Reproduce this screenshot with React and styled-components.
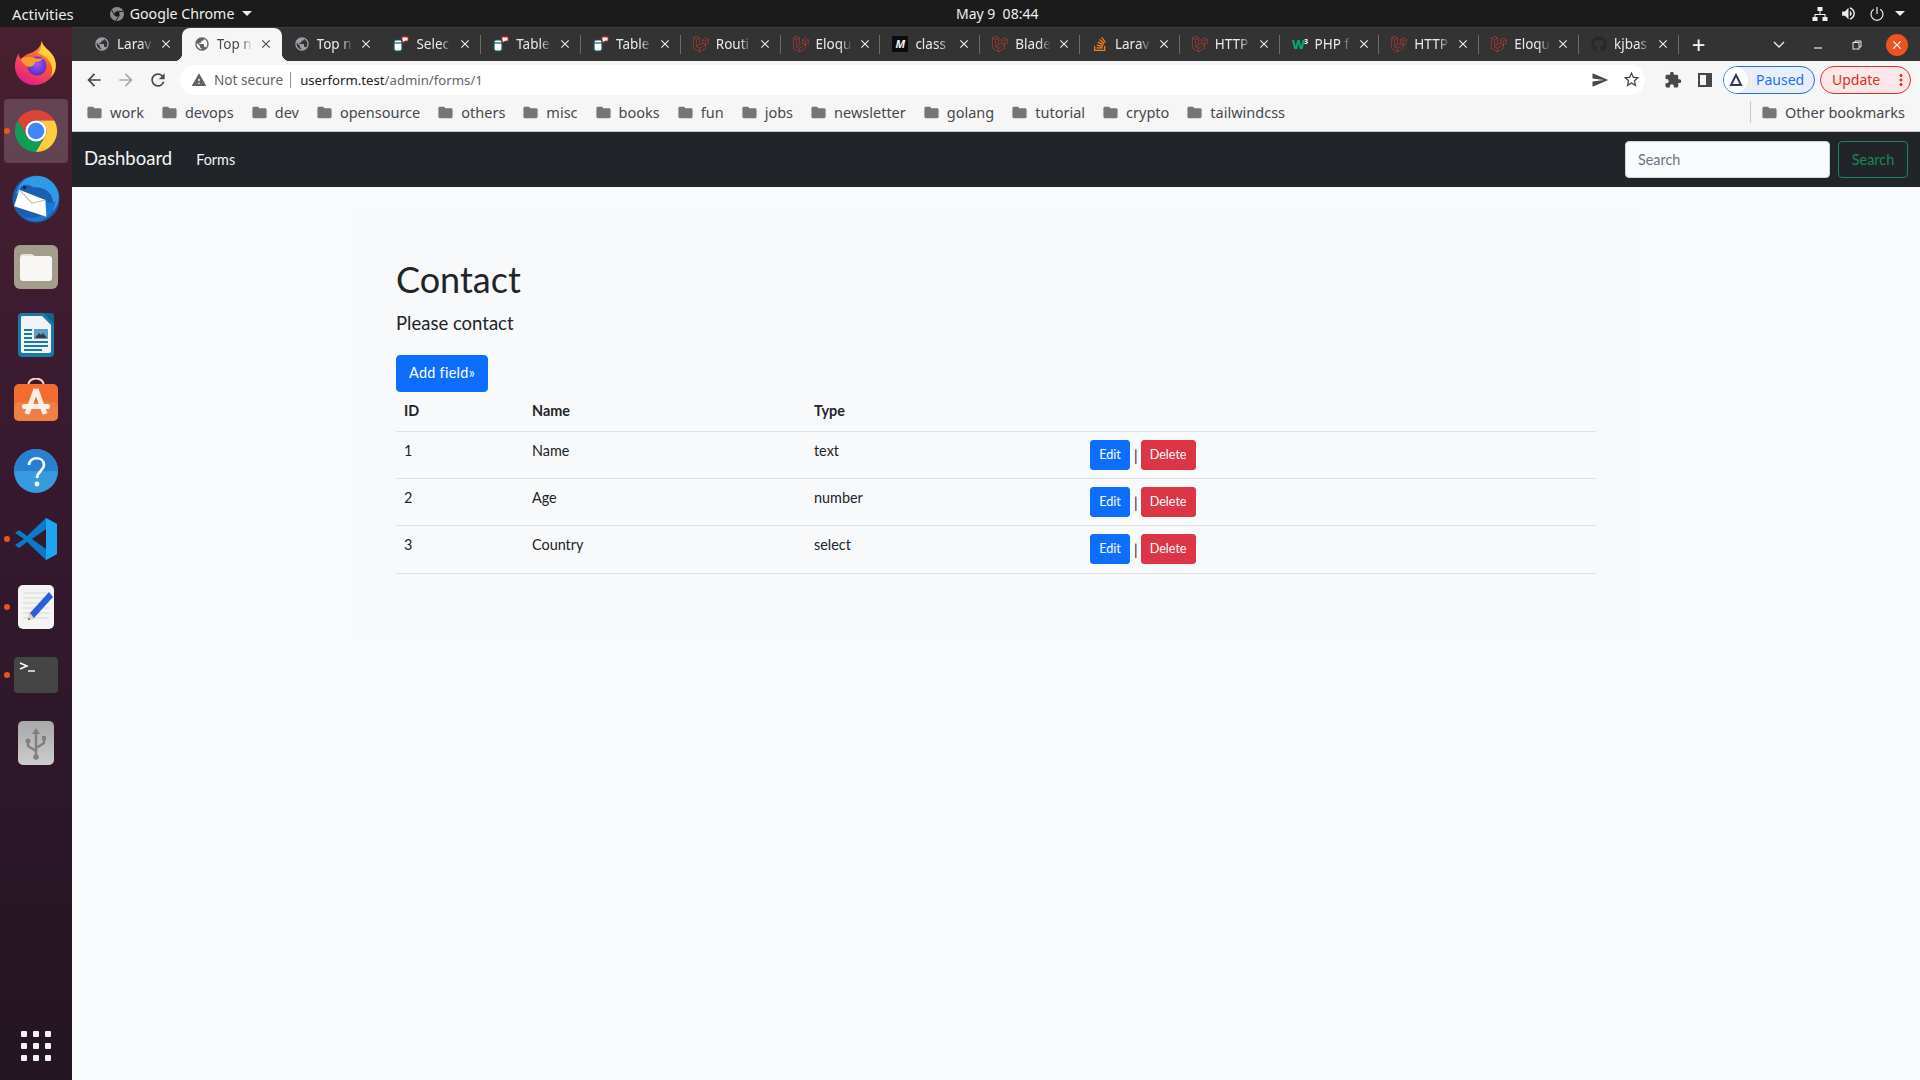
import React from 'react';
import styled, { createGlobalStyle } from 'styled-components';
import { FaGithub, FaStackOverflow } from 'react-icons/fa';
import { SiLaravel } from 'react-icons/si';
import {
  MdArrowBack,
  MdArrowForward,
  MdClose,
  MdExtension,
  MdFolder,
  MdMoreVert,
  MdPublic,
  MdRefresh,
  MdSend,
  MdStarBorder,
  MdVolumeUp,
  MdWarning
} from 'react-icons/md';

const UI_FONT = '"Noto Sans", "Open Sans", sans-serif';
const PAGE_FONT = 'Lato, "Noto Sans", sans-serif';

const GlobalStyle = createGlobalStyle`
  html, body {
    margin: 0;
    padding: 0;
    height: 100%;
    overflow: hidden;
    background: #f8fafc;
  }
  * {
    box-sizing: border-box;
  }
`;

const Desktop = styled.div`
  width: 1920px;
  height: 1080px;
  display: grid;
  grid-template-rows: 27px 1fr;
  grid-template-columns: 72px 1fr;
  overflow: hidden;
  font-family: ${UI_FONT};
`;

/* gnome top bar */
const TopBar = styled.header`
  grid-column: 1 / 3;
  display: grid;
  grid-template-columns: 956px auto 1fr;
  align-items: center;
  background: #1b1b1b;
  color: #eeeeee;
  font-size: 14px;
`;

const TopLeft = styled.div`
  display: flex;
  align-items: center;
  padding-left: 12px;
`;

const Activities = styled.span`
  font-size: 14.8px;
`;

const AppMenu = styled.div`
  display: flex;
  align-items: center;
  gap: 6px;
  margin-left: 36px;
  font-size: 14.2px;
`;

const Caret = styled.span`
  width: 0;
  height: 0;
  margin-left: ${({ offset }) => offset};
  border-left: 5px solid transparent;
  border-right: 5px solid transparent;
  border-top: 5px solid #eeeeee;
`;

const TopRight = styled.div`
  display: flex;
  align-items: center;
  justify-content: flex-end;
  gap: 12px;
  padding-right: 15px;
`;

/* dock */
const Dock = styled.nav`
  display: flex;
  flex-direction: column;
  align-items: center;
  padding-top: 2px;
  background: linear-gradient(180deg, #48202f 0%, #36192f 45%, #231521 100%);
`;

const DockSlot = styled.div`
  position: relative;
  flex: 0 0 ${({ active }) => (active ? '64px' : '68px')};
  width: 64px;
  display: flex;
  align-items: center;
  justify-content: center;
  border-radius: 4px;
  background: ${({ active }) => (active ? 'rgba(255,255,255,0.17)' : 'transparent')};
  margin: ${({ active }) => (active ? '2px 0' : '0')};
`;

const RunDot = styled.span`
  position: absolute;
  left: 0;
  top: 50%;
  width: 6px;
  height: 6px;
  margin-top: -3px;
  border-radius: 50%;
  background: #e95420;
`;

const AppGrid = styled.div`
  margin-top: auto;
  margin-bottom: 19px;
  display: grid;
  grid-template-columns: repeat(3, 6px);
  gap: 6px;
`;

const AppGridDot = styled.span`
  width: 6px;
  height: 6px;
  border-radius: 1px;
  background: #f2f2f2;
`;

const Firefox = () => (
  <svg width="46" height="48" viewBox="0 0 48 48">
    <defs>
      <linearGradient id="ffBody" x1="0.8" y1="0" x2="0.3" y2="1">
        <stop offset="0" stopColor="#ffb02e" />
        <stop offset="0.45" stopColor="#ff5a36" />
        <stop offset="1" stopColor="#e31b8d" />
      </linearGradient>
      <radialGradient id="ffCore" cx="0.5" cy="0.4" r="0.6">
        <stop offset="0" stopColor="#9a5cf5" />
        <stop offset="1" stopColor="#5b2bc0" />
      </radialGradient>
    </defs>
    <path d="M30 1c1 6 6 8 10 13 5 6 6 14 3 20-4 8-11 13-20 13C11 47 2 38 2 27c0-5 2-10 4-13 0 3 1 5 3 6 2-4 7-6 11-7 4-2 9-5 10-12z" fill="url(#ffBody)" />
    <path d="M30 1c1 6 6 8 10 13 5 6 6 14 3 20-1 2-2 3-3 5 2-8 1-16-6-21-3-3-6-3-8-5 3-2 4-7 4-12z" fill="#ffcf3f" />
    <circle cx="25" cy="27" r="10" fill="url(#ffCore)" />
    <path d="M8 20c4-3 10-3 15-1 3 1 7 1 9-1-2 4-6 5-9 5 0 3-3 5-6 5-3 0-6-2-9-8z" fill="#ff9a2e" />
  </svg>
);

const Chrome = () => (
  <svg width="46" height="46" viewBox="0 0 48 48">
    <path d="M4.95 13A22 22 0 0 1 43.05 13H24A11 11 0 0 0 14.47 29.5z" fill="#db4437" />
    <path d="M4.95 13A22 22 0 0 0 24 46L33.53 29.5A11 11 0 0 1 14.47 29.5z" fill="#0f9d58" />
    <path d="M24 46A22 22 0 0 0 43.05 13H24A11 11 0 0 1 33.53 29.5z" fill="#ffcd40" />
    <circle cx="24" cy="24" r="11" fill="#ffffff" />
    <circle cx="24" cy="24" r="8.6" fill="#4285f4" />
  </svg>
);

const Thunderbird = () => (
  <svg width="50" height="50" viewBox="0 0 48 48">
    <circle cx="24" cy="24" r="22.5" fill="#1a5fb0" />
    <path d="M5 20C6 9 15 1 27 2c10 1 18 9 19 19 0 6-2 11-6 15 2-9 0-17-7-21-5-3-11-3-17-1-4 1-8 3-11 6z" fill="#2f9be6" />
    <path d="M33 26c4 2 7 2 10 0-1 9-7 17-15 19-6 1-12 0-17-4 8 2 16 1 22-3z" fill="#1c78d0" />
    <path d="M8 15L33 25 34 41 3 31z" fill="#ffffff" />
    <path d="M8 15l12 13 13-3" fill="none" stroke="#b8bcc4" strokeWidth="1" />
    <path d="M8 15c1-4 6-6 10-4 4 1 8 4 9 8z" fill="#1a5fb0" />
    <circle cx="13" cy="13" r="1.6" fill="#0c2444" />
  </svg>
);

const Files = () => (
  <svg width="44" height="44" viewBox="0 0 44 44">
    <rect width="44" height="44" rx="6" fill="#a49d8b" />
    <path d="M6 12a3 3 0 0 1 3-3h9l4 3h-16z" fill="#e6e3dc" />
    <rect x="6" y="11" width="32" height="25" rx="3" fill="#f8f7f5" />
  </svg>
);

const Writer = () => (
  <svg width="36" height="44" viewBox="0 0 36 44">
    <path d="M4 0h22l10 10v30a4 4 0 0 1-4 4H4a4 4 0 0 1-4-4V4a4 4 0 0 1 4-4z" fill="#1c78ab" />
    <path d="M4 3h20l9 9v26a2 2 0 0 1-2 2H5a2 2 0 0 1-2-2V4z" fill="#f1f3f4" />
    <path d="M26 0h7a3 3 0 0 1 3 3v7z" fill="#14618c" />
    <rect x="6" y="16" width="8" height="2" fill="#1c78ab" />
    <rect x="6" y="20" width="8" height="2" fill="#1c78ab" />
    <rect x="6" y="24" width="8" height="2" fill="#1c78ab" />
    <rect x="16" y="16" width="14" height="10" fill="#5b9fd0" />
    <path d="M17 25l4-5 2 2 2-2 4 5z" fill="#3b3b3b" />
    <rect x="6" y="28" width="24" height="2" fill="#1c78ab" />
    <rect x="6" y="32" width="24" height="2" fill="#1c78ab" />
    <rect x="6" y="36" width="18" height="2" fill="#1c78ab" />
  </svg>
);

const Store = () => (
  <svg width="44" height="50" viewBox="0 0 44 50">
    <path d="M14 8c0-10 16-10 16 0" fill="none" stroke="#f4d7b5" strokeWidth="2" />
    <rect y="6" width="44" height="37" rx="5" fill="#f26d2e" />
    <rect y="24" width="44" height="19" rx="5" fill="#ee7f47" />
    <path d="M22 11L13 36M22 11l9 25" fill="none" stroke="#fff0e6" strokeWidth="5" />
    <rect x="8" y="26" width="28" height="5" rx="2" fill="#fff0e6" />
  </svg>
);

const Help = () => (
  <svg width="46" height="46" viewBox="0 0 46 46">
    <circle cx="23" cy="23" r="22" fill="#3a9ae0" />
    <path d="M1 23a22 22 0 0 1 44 0z" fill="#2a80d0" />
    <path d="M16 17c0-9 15-9 15 0 0 6-7 6-7 13" fill="none" stroke="#ffffff" strokeWidth="2.6" />
    <circle cx="24" cy="36" r="2.4" fill="#ffffff" />
  </svg>
);

const VsCode = () => (
  <svg width="44" height="44" viewBox="0 0 44 44">
    <path d="M32 1l11 6v30l-11 6-19-18-8 6-4-3 9-6-9-6 4-3 8 6z" fill="#0a7bc4" />
    <path d="M32 1l11 6v30l-11 6z" fill="#20a4f0" />
    <path d="M32 12L18 22l14 10z" fill="#36192f" />
  </svg>
);

const Gedit = () => (
  <svg width="36" height="44" viewBox="0 0 36 44">
    <rect width="36" height="44" rx="5" fill="#f4f4f4" />
    <path d="M5 8h26M5 13h26M5 18h26M5 23h26M5 28h26M5 33h26" stroke="#d6d6d6" strokeWidth="1" />
    <path d="M31 7l4 5-19 21-6 2 2-7z" fill="#2b5fd9" />
    <path d="M12 28l4 5-6 2z" fill="#f5d2a8" />
    <path d="M11 33l-1 2 2-.6z" fill="#333333" />
  </svg>
);

const Terminal = () => (
  <svg width="44" height="36" viewBox="0 0 44 36">
    <rect width="44" height="36" rx="4" fill="#454545" />
    <path d="M6 6l7 3-7 3" fill="none" stroke="#ffffff" strokeWidth="1.4" />
    <path d="M14 14h7" stroke="#ffffff" strokeWidth="1.4" />
  </svg>
);

const UsbDrive = () => (
  <svg width="36" height="44" viewBox="0 0 36 44">
    <defs>
      <linearGradient id="usbBody" x1="0" y1="0" x2="0" y2="1">
        <stop offset="0" stopColor="#a8a8a8" />
        <stop offset="1" stopColor="#cdcdcd" />
      </linearGradient>
    </defs>
    <rect width="36" height="44" rx="5" fill="url(#usbBody)" />
    <path d="M18 8v28M18 30l-8-5v-5M18 27l8-5v-4" fill="none" stroke="#808080" strokeWidth="2.4" />
    <path d="M14 13l4-6 4 6z" fill="#808080" />
    <circle cx="18" cy="36" r="2.8" fill="#808080" />
    <circle cx="10" cy="20" r="2.5" fill="#808080" />
    <rect x="24" y="15" width="4" height="4" fill="#808080" />
  </svg>
);

const dockItems = [
  { key: 'firefox', Icon: Firefox },
  { key: 'chrome', Icon: Chrome, active: true, running: true },
  { key: 'thunderbird', Icon: Thunderbird },
  { key: 'files', Icon: Files },
  { key: 'writer', Icon: Writer },
  { key: 'store', Icon: Store },
  { key: 'help', Icon: Help },
  { key: 'vscode', Icon: VsCode, running: true },
  { key: 'gedit', Icon: Gedit, running: true },
  { key: 'terminal', Icon: Terminal, running: true },
  { key: 'usb', Icon: UsbDrive }
];

/* browser window */
const Browser = styled.div`
  display: flex;
  flex-direction: column;
  min-width: 0;
`;

const TabStrip = styled.div`
  flex: 0 0 34px;
  display: flex;
  align-items: stretch;
  padding-left: 10px;
  background: #333333;
  border-top: 1px solid #3d3d3d;
`;

const Tab = styled.div`
  position: relative;
  flex: 0 0 99.8px;
  display: flex;
  align-items: center;
  gap: 7px;
  padding: 0 0 2px 12px;
  color: ${({ active }) => (active ? '#45494d' : '#e8eaed')};
  font-size: 13.5px;
  background: ${({ active }) => (active ? '#f6f6f6' : 'transparent')};
  border-radius: ${({ active }) => (active ? '8px 8px 0 0' : '0')};

  &::after {
    content: '';
    position: absolute;
    right: 0;
    top: 7px;
    bottom: 7px;
    width: 1px;
    background: ${({ sep }) => (sep ? '#6c6c6c' : 'transparent')};
  }
`;

const TabFlare = styled.span`
  position: absolute;
  bottom: 0;
  ${({ side }) => side}: -8px;
  width: 8px;
  height: 8px;
  background: radial-gradient(
    circle at ${({ side }) => (side === 'left' ? '0 0' : '100% 0')},
    transparent 8px,
    #f6f6f6 8.5px
  );
`;

const TabIcon = styled.span`
  flex: 0 0 16px;
  height: 16px;
  display: flex;
  align-items: center;
  justify-content: center;
  color: ${({ color }) => color};
`;

const TabLabel = styled.span`
  flex: 0 0 36px;
  overflow: hidden;
  white-space: nowrap;
  -webkit-mask-image: linear-gradient(90deg, #000 68%, transparent 100%);
  mask-image: linear-gradient(90deg, #000 68%, transparent 100%);
`;

const TabClose = styled.span`
  display: flex;
  margin-left: -1px;
  color: ${({ active }) => (active ? '#45494d' : '#e8eaed')};
`;

const NewTab = styled.span`
  margin-left: 13px;
  align-self: center;
  display: flex;
  color: #f1f3f4;
  font-size: 24px;
  line-height: 24px;
  font-weight: 400;
`;

const WindowControls = styled.div`
  margin-left: auto;
  display: flex;
  align-items: center;
  color: #e8eaed;
`;

const WindowButton = styled.span`
  flex: 0 0 39px;
  display: flex;
  justify-content: center;
  align-items: center;
`;

const CloseCircle = styled.span`
  width: 22px;
  height: 22px;
  margin: 0 12px 0 10px;
  border-radius: 50%;
  background: #e95420;
  color: #ffffff;
  display: flex;
  align-items: center;
  justify-content: center;
`;

const Toolbar = styled.div`
  flex: 0 0 34px;
  display: flex;
  align-items: flex-end;
  padding-left: 6px;
  background: #f6f6f6;
`;

const NavGroup = styled.div`
  display: flex;
  margin-right: 6px;
  align-self: stretch;
  padding-top: 4px;
`;

const NavButton = styled.span`
  flex: 0 0 32px;
  display: flex;
  align-items: center;
  justify-content: center;
  color: ${({ disabled }) => (disabled ? '#aaaaaa' : '#45494d')};
`;

const Omnibox = styled.div`
  flex: 1;
  height: 30px;
  display: flex;
  align-items: center;
  padding: 0 4px 1px 11px;
  background: #ffffff;
  border-radius: 15px;
  font-size: 13.2px;
`;

const SecurityText = styled.span`
  margin-left: 7px;
  padding-right: 7px;
  border-right: 1px solid #8a8d91;
  font-size: 13.6px;
  line-height: 16px;
  color: #5f6368;
`;

const UrlHost = styled.span`
  margin-left: 9px;
  color: #202124;
`;

const UrlPath = styled.span`
  color: #5f6368;
`;

const OmniActions = styled.div`
  margin-left: auto;
  display: flex;
  align-items: center;
  gap: 13px;
  color: #45494d;
`;

const ToolActions = styled.div`
  display: flex;
  align-items: center;
  align-self: stretch;
  gap: 5px;
  padding: 4px 9px 0 14px;
`;

const ToolIcon = styled.span`
  flex: 0 0 27px;
  display: flex;
  justify-content: center;
  color: #45494d;
`;

const Chip = styled.div`
  height: 28px;
  width: ${({ width }) => width};
  display: flex;
  align-items: center;
  padding-bottom: 1px;
  font-size: 14px;
  border-radius: 14px;
  overflow: hidden;
  border: 1px solid ${({ color }) => color};
  color: ${({ color }) => color};
  background: ${({ tint }) => tint};
`;

const ChipAvatar = styled.span`
  width: 24px;
  height: 26px;
  flex: 0 0 24px;
  display: flex;
  justify-content: center;
  align-items: center;
  background: #ffffff;
  border-radius: 0 13px 13px 0;
`;

const ChipText = styled.span`
  margin-left: ${({ indent }) => indent};
`;

const ChipMenu = styled.span`
  margin-left: auto;
  display: flex;
`;

const BookmarksBar = styled.div`
  flex: 0 0 37px;
  display: flex;
  align-items: center;
  gap: 17px;
  padding: 0 15px 2px 14px;
  background: #f6f6f6;
  border-bottom: 1px solid #c9cacb;
  color: #45494d;
  font-size: 14.5px;
`;

const Bookmark = styled.div`
  display: flex;
  align-items: center;
  gap: 7px;
  white-space: nowrap;
`;

const OtherBookmarks = styled(Bookmark)`
  margin-left: auto;
  padding-left: 10px;
  border-left: 1px solid #c9cacb;
  line-height: 22px;
`;

const FolderIcon = styled(MdFolder)`
  color: #757575;
  font-size: 17px;
`;

/* the page inside the browser */
const Page = styled.main`
  flex: 1;
  background: #f8fafc;
  font-family: ${PAGE_FONT};
  color: #212529;
`;

const Navbar = styled.div`
  height: 55px;
  display: flex;
  align-items: center;
  padding: 0 12px;
  background: #212529;
`;

const Brand = styled.a`
  color: #f4f4f4;
  font-size: 18.5px;
  margin: 0 24px 3px 0;
`;

const NavLink = styled.a`
  color: #f4f4f4;
  font-size: 14.4px;
  margin-bottom: 1px;
`;

const SearchForm = styled.form`
  margin-left: auto;
  display: flex;
  gap: 8px;
`;

const SearchInput = styled.input`
  width: 205px;
  height: 37px;
  padding: 6px 12px;
  font-family: ${PAGE_FONT};
  font-size: 14.4px;
  color: #212529;
  background: #f8fafc;
  border: 1px solid #ced4da;
  border-radius: 4px;

  &::placeholder {
    color: #6c757d;
    opacity: 1;
  }
`;

const SearchButton = styled.button`
  width: 70px;
  height: 37px;
  padding: 0;
  font-family: ${PAGE_FONT};
  font-size: 14.4px;
  color: #198754;
  background: transparent;
  border: 1px solid #198754;
  border-radius: 4px;
`;

const Jumbotron = styled.section`
  width: 1296px;
  margin: 24px auto 0;
  padding: 48px;
  background: #f8f9fa;
  border-radius: 5px;
`;

const Title = styled.h1`
  margin: 0 0 10px;
  font-size: 36px;
  line-height: 41px;
  font-weight: 400;
`;

const Lead = styled.p`
  margin: 0 0 18px;
  font-size: 18.5px;
  line-height: 27px;
`;

const Button = styled.a`
  display: inline-block;
  padding: ${({ small }) => (small ? '4px 0' : '6px 12px')};
  height: ${({ small }) => (small ? '30px' : '37px')};
  font-size: ${({ small }) => (small ? '12.6px' : '14.4px')};
  line-height: ${({ small }) => (small ? '20px' : '22px')};
  letter-spacing: ${({ small }) => (small ? '0' : '0.3px')};
  width: ${({ width }) => width};
  text-align: center;
  color: #ffffff;
  background: ${({ color }) => color};
  border: 1px solid ${({ color }) => color};
  border-radius: ${({ small }) => (small ? '3px' : '4px')};
`;

const Table = styled.table`
  width: 1200px;
  margin-bottom: 15px;
  border-collapse: collapse;
  table-layout: fixed;
  font-size: 14.4px;
  line-height: 23px;
`;

const HeadCell = styled.th`
  width: ${({ width }) => width};
  padding: 7px 8px 9px;
  text-align: left;
  font-weight: 700;
  border-bottom: 1px solid #dee2e6;
`;

const Cell = styled.td`
  height: ${({ tall }) => (tall ? '48px' : '47px')};
  padding: 7px 8px 8px;
  vertical-align: top;
  border-bottom: 1px solid #dee2e6;
`;

const Actions = styled.div`
  display: flex;
  align-items: center;
  gap: 4px;
  height: 30px;
  margin-top: 1px;
`;

const Divider = styled.span`
  font-size: 14.4px;
  margin-right: -1px;
`;

const GnomeChromeIcon = () => (
  <svg width="14" height="14" viewBox="0 0 14 14">
    <circle cx="7" cy="7" r="7" fill="#8a8a8a" />
    <circle cx="7" cy="7" r="2.6" fill="#1b1b1b" />
    <path d="M7 4.4h6M9.2 8.4L6 13.6M4.8 8.4L1.6 3" stroke="#1b1b1b" strokeWidth="1" />
  </svg>
);

const NetworkIcon = () => (
  <svg width="16" height="16" viewBox="0 0 16 16" fill="#eeeeee">
    <rect x="5.5" y="1" width="5" height="4" />
    <rect x="0.5" y="11" width="5" height="4" />
    <rect x="10.5" y="11" width="5" height="4" />
    <path d="M7.5 5h1v3h5v3h-1V9H3.5v2h-1V8h5z" />
  </svg>
);

const PowerIcon = () => (
  <svg width="16" height="16" viewBox="0 0 16 16" fill="none" stroke="#eeeeee" strokeWidth="1.2">
    <path d="M4.8 3.2a6 6 0 1 0 6.4 0" />
    <path d="M8 1v7" />
  </svg>
);

const SidePanelIcon = () => (
  <svg width="14" height="14" viewBox="0 0 14 14" fill="none">
    <rect x="1" y="1" width="12" height="12" stroke="#45494d" strokeWidth="2" />
    <rect x="8" y="1" width="5" height="12" fill="#45494d" />
  </svg>
);

const DatabaseFavicon = () => (
  <svg width="16" height="16" viewBox="0 0 16 16">
    <rect x="1" y="4" width="8" height="11" rx="2" fill="#ffffff" stroke="#0d5c63" strokeWidth="1.2" />
    <path d="M1 7h8" stroke="#0d5c63" strokeWidth="1.2" />
    <path d="M9 1h6v4h-3l-2 2V5H9z" fill="#ffffff" stroke="#d8262c" strokeWidth="1" />
  </svg>
);

const MediumFavicon = styled.span`
  width: 16px;
  height: 16px;
  display: flex;
  align-items: center;
  justify-content: center;
  background: #0b0b10;
  color: #f1f1f1;
  font-size: 11px;
  font-style: italic;
  font-weight: 700;
`;

const W3Favicon = styled.span`
  color: #04aa6d;
  font-size: 13px;
  font-weight: 800;
  letter-spacing: -1px;

  sup {
    font-size: 7px;
    color: #f1f1f1;
    vertical-align: 5px;
    line-height: 0;
  }
`;

const favicons = {
  globe: <MdPublic size={16} />,
  db: <DatabaseFavicon />,
  laravel: <SiLaravel size={16} />,
  medium: <MediumFavicon>M</MediumFavicon>,
  so: <FaStackOverflow size={16} />,
  w3: (
    <W3Favicon>
      W<sup>3</sup>
    </W3Favicon>
  ),
  github: <FaGithub size={16} />
};

const tabs = [
  { title: 'Larav', icon: 'globe', color: '#9aa0a6' },
  { title: 'Top n', icon: 'globe', color: '#5f6368', active: true },
  { title: 'Top n', icon: 'globe', color: '#9aa0a6' },
  { title: 'Selec', icon: 'db', sep: true },
  { title: 'Table', icon: 'db', sep: true },
  { title: 'Table', icon: 'db', sep: true },
  { title: 'Routi', icon: 'laravel', color: '#cf3a30', sep: true },
  { title: 'Eloqu', icon: 'laravel', color: '#cf3a30', sep: true },
  { title: 'class', icon: 'medium', sep: true },
  { title: 'Blade', icon: 'laravel', color: '#cf3a30', sep: true },
  { title: 'Larav', icon: 'so', color: '#f48024', sep: true },
  { title: 'HTTP', icon: 'laravel', color: '#cf3a30', sep: true },
  { title: 'PHP f', icon: 'w3', sep: true },
  { title: 'HTTP', icon: 'laravel', color: '#cf3a30', sep: true },
  { title: 'Eloqu', icon: 'laravel', color: '#cf3a30', sep: true },
  { title: 'kjbas', icon: 'github', color: '#24292f', sep: true }
];

const bookmarks = [
  'work', 'devops', 'dev', 'opensource', 'others', 'misc', 'books', 'fun',
  'jobs', 'newsletter', 'golang', 'tutorial', 'crypto', 'tailwindcss'
];

const fields = [
  { id: 1, name: 'Name', type: 'text' },
  { id: 2, name: 'Age', type: 'number' },
  { id: 3, name: 'Country', type: 'select' }
];

const App = () => (
  <Desktop>
    <GlobalStyle />
    <TopBar>
      <TopLeft>
        <Activities>Activities</Activities>
        <AppMenu>
          <GnomeChromeIcon />
          <span>Google Chrome</span>
          <Caret offset="2px" />
        </AppMenu>
      </TopLeft>
      <span>May 9&nbsp;&nbsp;08:44</span>
      <TopRight>
        <NetworkIcon />
        <MdVolumeUp size={17} />
        <PowerIcon />
        <Caret offset="-2px" />
      </TopRight>
    </TopBar>

    <Dock>
      {dockItems.map(({ key, Icon, active, running }) => (
        <DockSlot key={key} active={active}>
          {running && <RunDot />}
          <Icon />
        </DockSlot>
      ))}
      <AppGrid>
        {Array.from({ length: 9 }, (_, i) => (
          <AppGridDot key={i} />
        ))}
      </AppGrid>
    </Dock>

    <Browser>
      <TabStrip>
        {tabs.map((tab, i) => (
          <Tab key={i} active={tab.active} sep={tab.sep}>
            {tab.active && <TabFlare side="left" />}
            {tab.active && <TabFlare side="right" />}
            <TabIcon color={tab.color}>{favicons[tab.icon]}</TabIcon>
            <TabLabel>{tab.title}</TabLabel>
            <TabClose active={tab.active}>
              <MdClose size={14} />
            </TabClose>
          </Tab>
        ))}
        <NewTab>+</NewTab>
        <WindowControls>
          <WindowButton>
            <svg width="12" height="8" viewBox="0 0 12 8" fill="none" stroke="#e8eaed" strokeWidth="1.4">
              <path d="M1 1l5 5 5-5" />
            </svg>
          </WindowButton>
          <WindowButton>
            <svg width="10" height="10" viewBox="0 0 10 10" stroke="#e8eaed" strokeWidth="1.2">
              <path d="M1 8h8" />
            </svg>
          </WindowButton>
          <WindowButton>
            <svg width="10" height="10" viewBox="0 0 10 10" fill="none" stroke="#e8eaed" strokeWidth="1">
              <rect x="1" y="2.5" width="6" height="6.5" />
              <path d="M3 2.5V1h6v6H7" />
            </svg>
          </WindowButton>
          <CloseCircle>
            <MdClose size={14} />
          </CloseCircle>
        </WindowControls>
      </TabStrip>

      <Toolbar>
        <NavGroup>
          <NavButton>
            <MdArrowBack size={20} />
          </NavButton>
          <NavButton disabled>
            <MdArrowForward size={20} />
          </NavButton>
          <NavButton>
            <MdRefresh size={20} />
          </NavButton>
        </NavGroup>
        <Omnibox>
          <MdWarning size={16} color="#5f6368" />
          <SecurityText>Not secure</SecurityText>
          <UrlHost>userform.test</UrlHost>
          <UrlPath>/admin/forms/1</UrlPath>
          <OmniActions>
            <MdSend size={18} />
            <MdStarBorder size={19} />
          </OmniActions>
        </Omnibox>
        <ToolActions>
          <ToolIcon>
            <MdExtension size={18} />
          </ToolIcon>
          <ToolIcon>
            <SidePanelIcon />
          </ToolIcon>
          <Chip width="92px" color="#1a73e8" tint="#e8f0fe">
            <ChipAvatar>
              <svg width="14" height="14" viewBox="0 0 14 14" fill="none" stroke="#2b3a55" strokeWidth="2">
                <path d="M7 2l5 10H2z" />
              </svg>
            </ChipAvatar>
            <ChipText indent="8px">Paused</ChipText>
          </Chip>
          <Chip width="91px" color="#d93025" tint="#fce8e6">
            <ChipText indent="11px">Update</ChipText>
            <ChipMenu>
              <MdMoreVert size={18} />
            </ChipMenu>
          </Chip>
        </ToolActions>
      </Toolbar>

      <BookmarksBar>
        {bookmarks.map(name => (
          <Bookmark key={name}>
            <FolderIcon />
            {name}
          </Bookmark>
        ))}
        <OtherBookmarks>
          <FolderIcon />
          Other bookmarks
        </OtherBookmarks>
      </BookmarksBar>

      <Page>
        <Navbar>
          <Brand>Dashboard</Brand>
          <NavLink>Forms</NavLink>
          <SearchForm>
            <SearchInput placeholder="Search" />
            <SearchButton type="button">Search</SearchButton>
          </SearchForm>
        </Navbar>
        <Jumbotron>
          <Title>Contact</Title>
          <Lead>Please contact</Lead>
          <Button color="#0d6efd">Add field»</Button>
          <Table>
            <thead>
              <tr>
                <HeadCell width="128px">ID</HeadCell>
                <HeadCell width="282px">Name</HeadCell>
                <HeadCell width="276px">Type</HeadCell>
                <HeadCell width="514px" />
              </tr>
            </thead>
            <tbody>
              {fields.map(field => (
                <tr key={field.id}>
                  <Cell tall={field.id === 3}>{field.id}</Cell>
                  <Cell>{field.name}</Cell>
                  <Cell>{field.type}</Cell>
                  <Cell>
                    <Actions>
                      <Button small width="40px" color="#0d6efd">Edit</Button>
                      <Divider>|</Divider>
                      <Button small width="55px" color="#dc3545">Delete</Button>
                    </Actions>
                  </Cell>
                </tr>
              ))}
            </tbody>
          </Table>
        </Jumbotron>
      </Page>
    </Browser>
  </Desktop>
);

export default App;
